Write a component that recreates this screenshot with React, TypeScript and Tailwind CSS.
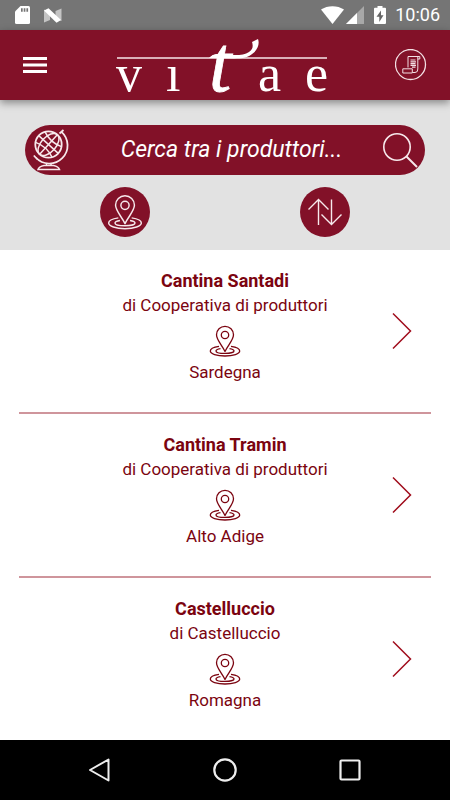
import { useState } from "react";

type Producer = {
  name: string;
  owner: string;
  region: string;
};

const producers: Producer[] = [
  { name: "Cantina Santadi", owner: "Cooperativa di produttori", region: "Sardegna" },
  { name: "Cantina Tramin", owner: "Cooperativa di produttori", region: "Alto Adige" },
  { name: "Castelluccio", owner: "Castelluccio", region: "Romagna" },
];

function PinIcon({ className }: { className?: string }) {
  return (
    <svg viewBox="0 0 36 32" className={className} fill="none" stroke="currentColor" strokeWidth="1.3" aria-hidden="true">
      <path d="M18 26.5C15 20 9.5 15 9.5 9.8a8.5 8.5 0 0 1 17 0C26.5 15 21 20 18 26.5Z" strokeLinejoin="round" />
      <circle cx="18" cy="10" r="3.7" />
      <path d="M12 21.3C6.8 22 3.3 23.800 3.3 26c0 2.800 6.500 5 14.700 5s14.700-2.200 14.700-5c0-2.200-3.500-4-8.700-4.700" />
      <path d="M13.5 23.6c-2.800.5-4.500 1.300-4.500 2.300 0 1.500 4 2.500 9 2.500s9-1 9-2.500c0-1-1.700-1.800-4.500-2.300" />
    </svg>
  );
}

function StatusBar() {
  return (
    <div className="flex h-[30px] shrink-0 items-center justify-between bg-[#757575] pr-[10px] pl-[15px] text-white">
      <div className="flex items-center gap-[13px]">
        <svg viewBox="0 0 15 18" className="h-[18px] w-[15px]" aria-hidden="true">
          <path d="M5.5 0H13.5A1.5 1.5 0 0 1 15 1.5V16.5A1.5 1.5 0 0 1 13.5 18H1.5A1.5 1.5 0 0 1 0 16.5V5.5Z" fill="#fff" />
          <path d="M6 2.2h1.7v3.500H6zM8.700 2.200h1.700v3.500H8.700zM11.400 2.200h1.700v3.500h-1.700z" fill="#757575" />
        </svg>
        <svg viewBox="0 0 19 15" className="h-[15px] w-[19px]" aria-hidden="true">
          <path d="M1 1.5 7 5v7L1 14.5ZM18.5.5V13l-6-2V3Z" fill="#c4c4c4" />
          <path d="M1 2.5 5.5.3 18 12l-4.5 2.700Z" fill="#fff" />
        </svg>
      </div>
      <div className="flex items-center">
        <svg viewBox="0 0 23 18" className="h-[18px] w-[23px]" aria-hidden="true">
          <path d="M0 3.5C6.5-1 16.5-1 23 3.5L11.5 18Z" fill="#fff" />
        </svg>
        <svg viewBox="0 0 18 18" className="ml-[2px] h-[18px] w-[18px]" aria-hidden="true">
          <path d="M18 0V18H0Z" fill="#a8a8a8" />
          <path d="M11 7V18H0Z" fill="#fff" />
        </svg>
        <svg viewBox="0 0 12 18" className="ml-[10px] h-[18px] w-[12px]" aria-hidden="true">
          <path d="M3.5 0h5v1.800H11a1 1 0 0 1 1 1V17a1 1 0 0 1-1 1H1a1 1 0 0 1-1-1V2.800a1 1 0 0 1 1-1h2.500Z" fill="#fff" />
          <path d="M7 4.5 2.5 10.8H5.3V16L9.5 9.3H7Z" fill="#666" />
        </svg>
        <span className="ml-[9px] text-[18px] leading-[30px]">10:06</span>
      </div>
    </div>
  );
}

function Logo() {
  return (
    <svg viewBox="0 0 218 60" className="h-[60px] w-[218px] overflow-visible" role="img" aria-label="vitae">
      <path d="M1 23H211" stroke="#d9b0b8" strokeWidth="1.8" />
      <path
        d="M93 23C96 19.500 99 19 104 19.300C118 20.300 127 21 133 17C137.500 14 137 10 136 7L142 4C143.500 8 142.500 13 138 17.500C132 23 127 23.400 118 23.400Z"
        fill="#fff"
      />
      <g fill="#fff" fontFamily="'Liberation Serif', serif" fontSize="52">
        <text x="0" y="56">v</text>
        <text x="50" y="56">ı</text>
        <text x="93" y="56" fontSize="80" fontStyle="italic" stroke="#fff" strokeWidth="0.8">t</text>
        <text x="142" y="56">a</text>
        <text x="189" y="56">e</text>
      </g>
    </svg>
  );
}

function Header() {
  return (
    <header className="relative z-10 flex h-[70px] shrink-0 items-center justify-between bg-[#821128] px-[23px] text-white shadow-[0_3px_8px_rgba(0,0,0,0.4)]">
      <button type="button" aria-label="Menu" className="flex h-8 w-8 items-center">
        <svg viewBox="0 0 24 18" className="h-[18px] w-[24px]" stroke="currentColor" strokeWidth="3" aria-hidden="true">
          <path d="M0 2.5h24M0 9h24M0 15.5h24" />
        </svg>
      </button>
      <h1>
        <Logo />
      </h1>
      <button type="button" aria-label="Note" className="h-8 w-8">
        <svg viewBox="0 0 32 32" className="h-8 w-8" fill="none" stroke="#f3dfe3" aria-hidden="true">
          <circle cx="15.5" cy="15.5" r="15" strokeWidth="1.3" />
          <path d="M13 18.500V7.500H24.800V10H22.800V20Q23 23.500 20 23.500H17.500" />
          <path d="M13 7.500H22.800V10" />
          <path d="M7.800 19.800H17.300V24H7.800Z" />
          <path d="M15.500 11h5M15.500 12.800h5.500M15.500 14.600h5M15.500 16.400h5.500M17 18.200h3.500" strokeWidth="1.200" />
        </svg>
      </button>
    </header>
  );
}

function GlobeIcon() {
  return (
    <svg viewBox="0 0 36 42" className="h-[42px] w-[36px] shrink-0" fill="none" stroke="#f7e9ec" strokeWidth="1.5" aria-hidden="true">
      <circle cx="15.5" cy="15.5" r="13.2" strokeWidth="1.8" />
      <g transform="rotate(42 15.5 15.5)">
        <path d="M15.5 2.3v26.400M2.300 15.500h26.400M4.500 8.500Q15.500 13 26.500 8.500M4.500 22.500Q15.500 18 26.500 22.500" />
        <ellipse cx="15.5" cy="15.5" rx="7.5" ry="13.2" />
      </g>
      <path d="M26.5 4.5 30.500 1M28.500 2.800A18.200 18.200 0 1 1 2.800 28.500M.8 26.500 4.500 30.500" strokeWidth="1.8" />
      <path d="M13.500 34v2.500M18 34v2.500M5 40.500Q6 37.500 11 36.500H20.500Q25.500 37.500 26.500 40.500Z" />
    </svg>
  );
}

function SearchPanel() {
  const [query, setQuery] = useState("");

  return (
    <section className="shrink-0 bg-[#e2e2e2] px-[25px] pt-[25px] pb-[13px]">
      <form
        role="search"
        className="flex h-[50px] items-center rounded-full bg-[#821128] pr-[7px] pl-[8px]"
        onSubmit={(event) => event.preventDefault()}
      >
        <GlobeIcon />
        <input
          type="text"
          aria-label="Cerca tra i produttori"
          className="min-w-0 flex-1 bg-transparent pl-3 text-center text-[23px] leading-8 text-white italic outline-none placeholder:text-white placeholder:opacity-100"
          value={query}
          onChange={(event) => setQuery(event.target.value)}
          placeholder="Cerca tra i produttori..."
        />
        <button type="submit" aria-label="Cerca" className="shrink-0">
          <svg viewBox="0 0 36 36" className="h-9 w-9" fill="none" stroke="#f7e9ec" strokeWidth="1.6" aria-hidden="true">
            <circle cx="15" cy="15" r="13.2" />
            <path d="M24.5 24.5 35 35" strokeWidth="2" />
          </svg>
        </button>
      </form>
      <div className="mt-3 grid grid-cols-2 justify-items-center">
        <button
          type="button"
          aria-label="Filtra per zona"
          className="flex h-[50px] w-[50px] items-center justify-center rounded-full bg-[#821128] text-[#f7e9ec]"
        >
          <PinIcon className="h-[36px] w-[40px]" />
        </button>
        <button
          type="button"
          aria-label="Ordina"
          className="flex h-[50px] w-[50px] items-center justify-center rounded-full bg-[#821128] text-[#f7e9ec]"
        >
          <svg viewBox="0 0 34 28" className="h-[28px] w-[34px]" fill="none" stroke="currentColor" strokeWidth="1.4" aria-hidden="true">
            <path d="M10.5 27V1.5M.5 11.5 10.5 1.5 20.5 11.5M23.5 1.5V26.5M13.5 16.5 23.5 26.5 33.5 16.5" />
          </svg>
        </button>
      </div>
    </section>
  );
}

function ProducerRow({ producer }: { producer: Producer }) {
  return (
    <li className="border-b-2 border-[#cf959c] last:border-b-0">
      <a href="#" className="flex items-center text-[#7b0410]">
        <div className="w-[39px] shrink-0" />
        <div className="flex min-w-0 flex-1 flex-col items-center pt-[19px] pb-[28px] text-center text-[17px] leading-6">
          <h2 className="text-[18px] font-bold">{producer.name}</h2>
          <p>di {producer.owner}</p>
          <PinIcon className="mt-2 h-[32px] w-[36px]" />
          <p className="mt-[3px]">{producer.region}</p>
        </div>
        <div className="w-[39px] shrink-0">
          <svg viewBox="0 0 20 38" className="h-[38px] w-[20px]" fill="none" stroke="#a00d1c" strokeWidth="1.5" aria-hidden="true">
            <path d="M1 1.5 18.5 19 1 36.5" />
          </svg>
        </div>
      </a>
    </li>
  );
}

function NavigationBar() {
  return (
    <nav aria-label="Sistema" className="flex h-[60px] shrink-0 items-center justify-center gap-[101px] bg-black text-[#eee]">
      <button type="button" aria-label="Indietro">
        <svg viewBox="0 0 24 24" className="h-6 w-6" fill="none" stroke="currentColor" strokeWidth="2" strokeLinejoin="round" aria-hidden="true">
          <path d="M20.5 1.5V22.5L2 12Z" />
        </svg>
      </button>
      <button type="button" aria-label="Home">
        <svg viewBox="0 0 24 24" className="h-6 w-6" fill="none" stroke="currentColor" strokeWidth="2.2" aria-hidden="true">
          <circle cx="12" cy="12" r="10.7" />
        </svg>
      </button>
      <button type="button" aria-label="Recenti">
        <svg viewBox="0 0 24 24" className="h-6 w-6" fill="none" stroke="currentColor" strokeWidth="2.2" aria-hidden="true">
          <rect x="2.5" y="2.5" width="19" height="19" rx="1" />
        </svg>
      </button>
    </nav>
  );
}

export default function App() {
  return (
    <div className="flex h-screen flex-col bg-white font-['Roboto',sans-serif]">
      <StatusBar />
      <Header />
      <main className="flex min-h-0 flex-1 flex-col">
        <SearchPanel />
        <ul className="min-h-0 flex-1 overflow-y-auto px-[19px]">
          {producers.map((producer) => (
            <ProducerRow key={producer.name} producer={producer} />
          ))}
        </ul>
      </main>
      <NavigationBar />
    </div>
  );
}
